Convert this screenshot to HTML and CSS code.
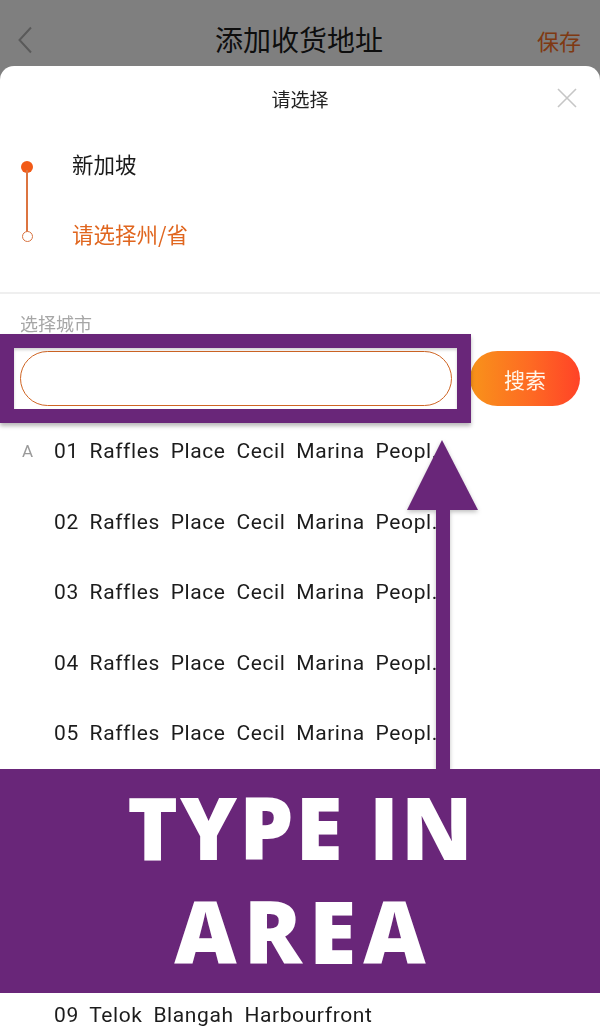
FILE: index.html
```html
<!DOCTYPE html>
<html lang="zh-CN">
<head>
<meta charset="utf-8">
<title>添加收货地址</title>
<link rel="stylesheet" href="styles.css">
</head>
<body>
<header class="nav">
  <span class="nav-back" aria-label="返回">
    <svg width="16" height="28" viewBox="0 0 16 28"><path d="M14 1.5 L2.5 14 L14 26.5" fill="none" stroke="currentColor" stroke-width="2"/></svg>
  </span>
  <h1 class="nav-title">添加收货地址</h1>
  <span class="nav-save">保存</span>
</header>

<div class="mask"></div>

<section class="sheet">
  <div class="sheet-head">
    <span class="sheet-title">请选择</span>
    <svg class="sheet-close" width="20" height="20" viewBox="0 0 20 20"><path d="M1 1 L19 19 M19 1 L1 19" stroke="currentColor" stroke-width="1.6" fill="none"/></svg>
  </div>

  <ol class="steps">
    <li class="step step-done"><span class="step-mark"></span><span class="step-text">新加坡</span></li>
    <li class="step step-current"><span class="step-mark"></span><span class="step-text">请选择州/省</span></li>
  </ol>

  <div class="divider"></div>

  <div class="city">
    <div class="city-label">选择城市</div>
    <div class="search">
      <input class="search-input" type="text">
      <button class="search-btn" type="button">搜索</button>
    </div>
  </div>

  <ul class="area-list">
    <li class="area-row"><span class="area-index">A</span><span class="area-name">01 Raffles Place Cecil Marina Peopl...</span></li>
    <li class="area-row"><span class="area-index"></span><span class="area-name">02 Raffles Place Cecil Marina Peopl...</span></li>
    <li class="area-row"><span class="area-index"></span><span class="area-name">03 Raffles Place Cecil Marina Peopl...</span></li>
    <li class="area-row"><span class="area-index"></span><span class="area-name">04 Raffles Place Cecil Marina Peopl...</span></li>
    <li class="area-row"><span class="area-index"></span><span class="area-name">05 Raffles Place Cecil Marina Peopl...</span></li>
    <li class="area-row"><span class="area-index"></span><span class="area-name">06 Raffles Place Cecil Marina Peopl...</span></li>
    <li class="area-row"><span class="area-index"></span><span class="area-name">07 Anson Tanjong Pagar</span></li>
    <li class="area-row"><span class="area-index"></span><span class="area-name">08 Tanjong Pagar Chinatown</span></li>
    <li class="area-row"><span class="area-index"></span><span class="area-name">09 Telok Blangah Harbourfront</span></li>
  </ul>
</section>

<div class="callout-frame"></div>
<svg class="callout-arrow" width="84" height="334" viewBox="0 0 84 334">
  <polygon points="42,4 7,74 78,74" fill="#692679"/>
  <rect x="36" y="73" width="14" height="261" fill="#692679"/>
</svg>
<div class="callout-banner">
  <span class="callout-line callout-line-1">TYPE IN</span>
  <span class="callout-line callout-line-2">AREA</span>
</div>
</body>
</html>
```

FILE: styles.css
```css
* {
  box-sizing: border-box;
}

html, body {
  margin: 0;
  padding: 0;
  width: 600px;
  height: 1026px;
  overflow: hidden;
  background: #ffffff;
  font-family: "Noto Sans CJK SC", "Noto Sans", sans-serif;
}

/* top navigation bar */
.nav {
  height: 80px;
  display: flex;
  align-items: center;
  padding: 0 19px 0 17px;
  background: #ffffff;
}

.nav-back {
  width: 60px;
  color: #b4b4b4;
  display: flex;
  align-items: center;
}

.nav-title {
  flex: 1;
  margin: 0 0 2px;
  text-align: center;
  font-size: 28px;
  font-weight: 400;
  color: #1c1c1c;
}

.nav-save {
  width: 60px;
  text-align: right;
  font-size: 22px;
  color: #ff7226;
}

/* dim layer behind the picker */
.mask {
  position: fixed;
  inset: 0;
  background: rgba(0, 0, 0, 0.5);
}

/* picker sheet */
.sheet {
  position: fixed;
  top: 66px;
  left: 0;
  right: 0;
  bottom: 0;
  background: #ffffff;
  border-radius: 14px 14px 0 0;
  overflow: hidden;
}

.sheet-head {
  position: relative;
  height: 64px;
  display: flex;
  align-items: center;
  justify-content: center;
}

.sheet-title {
  font-size: 19px;
  color: #222222;
}

.sheet-close {
  position: absolute;
  right: 23px;
  top: 22px;
  color: #c6c6c6;
}

/* selection steps */
.steps {
  list-style: none;
  margin: 0;
  padding: 0;
}

.step {
  position: relative;
  height: 70px;
  display: flex;
  align-items: center;
}

.step-mark {
  flex: none;
  width: 12px;
  height: 12px;
  margin: 3px 39px 0 21px;
  border-radius: 50%;
}

.step-done .step-mark {
  background: #f25a17;
}

.step-done::after {
  content: "";
  position: absolute;
  left: 26px;
  top: 40px;
  width: 1.5px;
  height: 66px;
  background: #dc7440;
}

.step-current .step-mark {
  width: 11px;
  height: 11px;
  margin-left: 21.5px;
  margin-right: 39.5px;
  border: 1px solid #d87340;
  background: #ffffff;
}

.step-text {
  font-size: 21.5px;
  color: #1a1a1a;
  margin-top: -4px;
}

.step-current .step-text {
  color: #e0661f;
}

.divider {
  margin-top: 22px;
  height: 2px;
  background: #efefef;
}

/* city search */
.city {
  padding: 16px 20px 0;
}

.city-label {
  font-size: 18px;
  line-height: 26px;
  color: #a6a6a6;
}

.search {
  margin-top: 15px;
  display: flex;
  gap: 18px;
  height: 55px;
}

.search-input {
  flex: 1;
  height: 55px;
  border: 1px solid #cf6524;
  border-radius: 28px;
  background: #ffffff;
  outline: none;
  padding: 0 20px;
  font-size: 18px;
}

.search-btn {
  width: 110px;
  height: 55px;
  border: none;
  border-radius: 28px;
  background: linear-gradient(90deg, #f8931a 0%, #fe6a23 55%, #ff4327 100%);
  color: #fff6ea;
  font-family: "Noto Sans CJK SC", sans-serif;
  font-size: 21px;
  padding: 0;
}

/* area list */
.area-list {
  list-style: none;
  margin: 10px 0 0;
  padding: 0;
}

.area-row {
  height: 70.5px;
  display: flex;
  align-items: center;
}

.area-index {
  flex: none;
  width: 54px;
  padding-left: 22px;
  font-family: Roboto, sans-serif;
  font-size: 17px;
  color: #9a9a9a;
}

.area-name {
  width: 383px;
  overflow: hidden;
  white-space: nowrap;
  font-family: Roboto, sans-serif;
  font-size: 21px;
  letter-spacing: 0.6px;
  word-spacing: 5px;
  color: #1c1c1c;
}

/* annotation layer */
.callout-frame {
  position: absolute;
  left: 0;
  top: 334px;
  width: 471px;
  height: 89px;
  border: 14px solid #692679;
  box-shadow: 0 3px 4px rgba(0, 0, 0, 0.28), inset 0 2px 3px rgba(0, 0, 0, 0.18);
}

.callout-arrow {
  position: absolute;
  left: 400px;
  top: 436px;
  filter: drop-shadow(0 2px 2px rgba(0, 0, 0, 0.25));
}

.callout-banner {
  position: absolute;
  left: 0;
  top: 769px;
  width: 600px;
  height: 224px;
  padding-top: 6px;
  background: #692679;
  display: flex;
  flex-direction: column;
  align-items: center;
  color: #ffffff;
  font-family: "Open Sans", sans-serif;
  font-weight: 800;
  font-size: 86px;
  line-height: 104px;
}

.callout-line-1 {
  letter-spacing: 2px;
  margin-right: -2px;
}

.callout-line-2 {
  letter-spacing: 7px;
  margin-right: -7px;
}
```
